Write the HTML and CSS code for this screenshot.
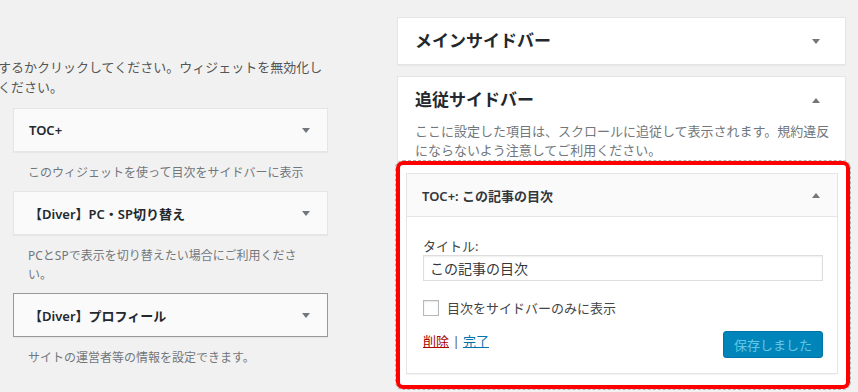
FILE: index.html
```html
<!DOCTYPE html>
<html lang="ja">
<head>
  <meta charset="UTF-8" />
  <meta name="viewport" content="width=device-width, initial-scale=1.0" />
  <title>ウィジェット</title>
  <link rel="stylesheet" href="styles.css">
</head>
<body>
  <div class="page">

    <!-- 利用できるウィジェット -->
    <div class="available">
      <p class="intro">するかクリックしてください。ウィジェットを無効化し<br>ください。</p>

      <div class="item">
        <div class="widget-top">
          <span class="widget-title">TOC+</span>
          <span class="arrow down"></span>
        </div>
        <p class="widget-desc">このウィジェットを使って目次をサイドバーに表示</p>
      </div>

      <div class="item">
        <div class="widget-top">
          <span class="widget-title">【Diver】PC・SP切り替え</span>
          <span class="arrow down"></span>
        </div>
        <p class="widget-desc">PCとSPで表示を切り替えたい場合にご利用ください。</p>
      </div>

      <div class="item">
        <div class="widget-top hover">
          <span class="widget-title">【Diver】プロフィール</span>
          <span class="arrow down"></span>
        </div>
        <p class="widget-desc">サイトの運営者等の情報を設定できます。</p>
      </div>
    </div>

    <!-- サイドバー -->
    <div class="sidebars">
      <div class="sidebar">
        <div class="sidebar-name">
          <h2>メインサイドバー</h2>
          <span class="arrow down wide"></span>
        </div>
      </div>

      <div class="sidebar open">
        <div class="sidebar-name">
          <h2>追従サイドバー</h2>
          <span class="arrow up wide"></span>
        </div>
        <p class="sidebar-desc">ここに設定した項目は、スクロールに追従して表示されます。規約違反にならないよう注意してご利用ください。</p>

        <div class="highlight">
          <div class="widget">
            <div class="widget-head">
              <span class="widget-title">TOC+: この記事の目次</span>
              <span class="arrow up"></span>
            </div>
            <div class="widget-inside">
              <label class="field-label" for="toc-title">タイトル:</label>
              <input type="text" id="toc-title" class="field" value="この記事の目次">

              <label class="check-row">
                <span class="checkbox"></span>
                目次をサイドバーのみに表示
              </label>

              <div class="widget-actions">
                <div class="links">
                  <a href="#" class="delete">削除</a> | <a href="#" class="done">完了</a>
                </div>
                <button class="save" disabled>保存しました</button>
              </div>
            </div>
          </div>
        </div>
      </div>
    </div>

  </div>
</body>
</html>
```

FILE: styles.css
```css
* {
  box-sizing: border-box;
}

html,
body {
  margin: 0;
  height: 392px;
  overflow: hidden;
}

body {
  background: #f1f1f1;
  font-family: "Noto Sans", "Noto Sans CJK JP", sans-serif;
  font-size: 13px;
  color: #444;
}

.page {
  display: flex;
  align-items: flex-start;
}

/* ---------- left column ---------- */

.available {
  width: 397px;
  padding: 58px 0 0 13px;
}

.intro {
  margin: 0 0 11px -15px;
  line-height: 19.5px;
  color: #555;
  white-space: nowrap;
}

.item {
  width: 315px;
}

.widget-top {
  display: flex;
  align-items: center;
  justify-content: space-between;
  height: 44px;
  padding: 0 17px 0 15px;
  background: #fafafa;
  border: 1px solid #e5e5e5;
  box-shadow: 0 1px 1px rgba(0, 0, 0, 0.04);
}

.widget-top.hover {
  border-color: #999;
}

.widget-title {
  font-weight: 600;
  color: #23282d;
}

.widget-desc {
  margin: 0;
  padding: 11px 22px 9px 15px;
  font-size: 12px;
  line-height: 19px;
  color: #72777c;
}

.arrow {
  width: 0;
  height: 0;
  border-left: 4px solid transparent;
  border-right: 4px solid transparent;
}

.arrow.down {
  border-top: 5px solid #72777c;
}

.arrow.up {
  border-bottom: 5px solid #72777c;
}

/* ---------- sidebars ---------- */

.sidebars {
  width: 449px;
  padding-top: 17px;
}

.sidebar {
  background: #fff;
  border: 1px solid #e5e5e5;
  box-shadow: 0 1px 1px rgba(0, 0, 0, 0.04);
  margin-bottom: 11px;
}

.sidebar-name {
  display: flex;
  align-items: center;
  justify-content: space-between;
  padding: 11px 25px 11px 17px;
}

.sidebar-name h2 {
  margin: 0;
  font-size: 17px;
  line-height: 24px;
  font-weight: 700;
  color: #23282d;
}

.sidebar.open {
  border-bottom: none;
  height: 312px;
}

.sidebar-desc {
  margin: -1px 0 0;
  padding: 0 10px 0 17px;
  line-height: 19px;
  color: #72777c;
}

/* red annotation frame */
.highlight {
  margin: 1px -5px 0 -2px;
  padding: 8px 8px 11px 6px;
  background: #fff;
  border: 4px solid #ff0000;
  border-radius: 7px;
  outline: 1px dashed #b0b0b0;
}

.widget {
  border: 1px solid #e5e5e5;
  background: #fff;
  box-shadow: 0 1px 1px rgba(0, 0, 0, 0.04);
}

.widget-head {
  display: flex;
  align-items: center;
  justify-content: space-between;
  height: 43px;
  padding: 0 17px 0 15px;
  background: #fafafa;
  border-bottom: 1px solid #e5e5e5;
}

.widget-head .widget-title {
  color: #32373c;
}

.widget-inside {
  padding: 20px 15px 15px 16px;
}

.field-label {
  display: block;
  line-height: 18px;
  color: #444;
}

.field {
  display: block;
  width: 400px;
  height: 26px;
  margin: 0;
  padding: 0 6px;
  border: 1px solid #ddd;
  box-shadow: inset 0 1px 2px rgba(0, 0, 0, 0.07);
  font-family: inherit;
  font-size: 14px;
  color: #32373c;
}

.check-row {
  display: flex;
  align-items: center;
  gap: 8px;
  margin-top: 19px;
  line-height: 16px;
  color: #444;
}

.checkbox {
  width: 16px;
  height: 16px;
  border: 1px solid #b4b9be;
  background: #fff;
  box-shadow: inset 0 1px 2px rgba(0, 0, 0, 0.1);
}

.widget-actions {
  display: flex;
  justify-content: space-between;
  align-items: flex-start;
  margin-top: 15px;
  width: 400px;
}

.links {
  line-height: 20px;
  color: #555;
}

.links a {
  text-decoration: underline;
}

.delete {
  color: #a00;
}

.done {
  color: #0073aa;
}

.save {
  width: 100px;
  height: 27px;
  padding: 0;
  background: #0085ba;
  border: 1px solid #0073aa;
  border-radius: 3px;
  font-family: inherit;
  font-size: 13px;
  color: #66c6e4;
}
```
